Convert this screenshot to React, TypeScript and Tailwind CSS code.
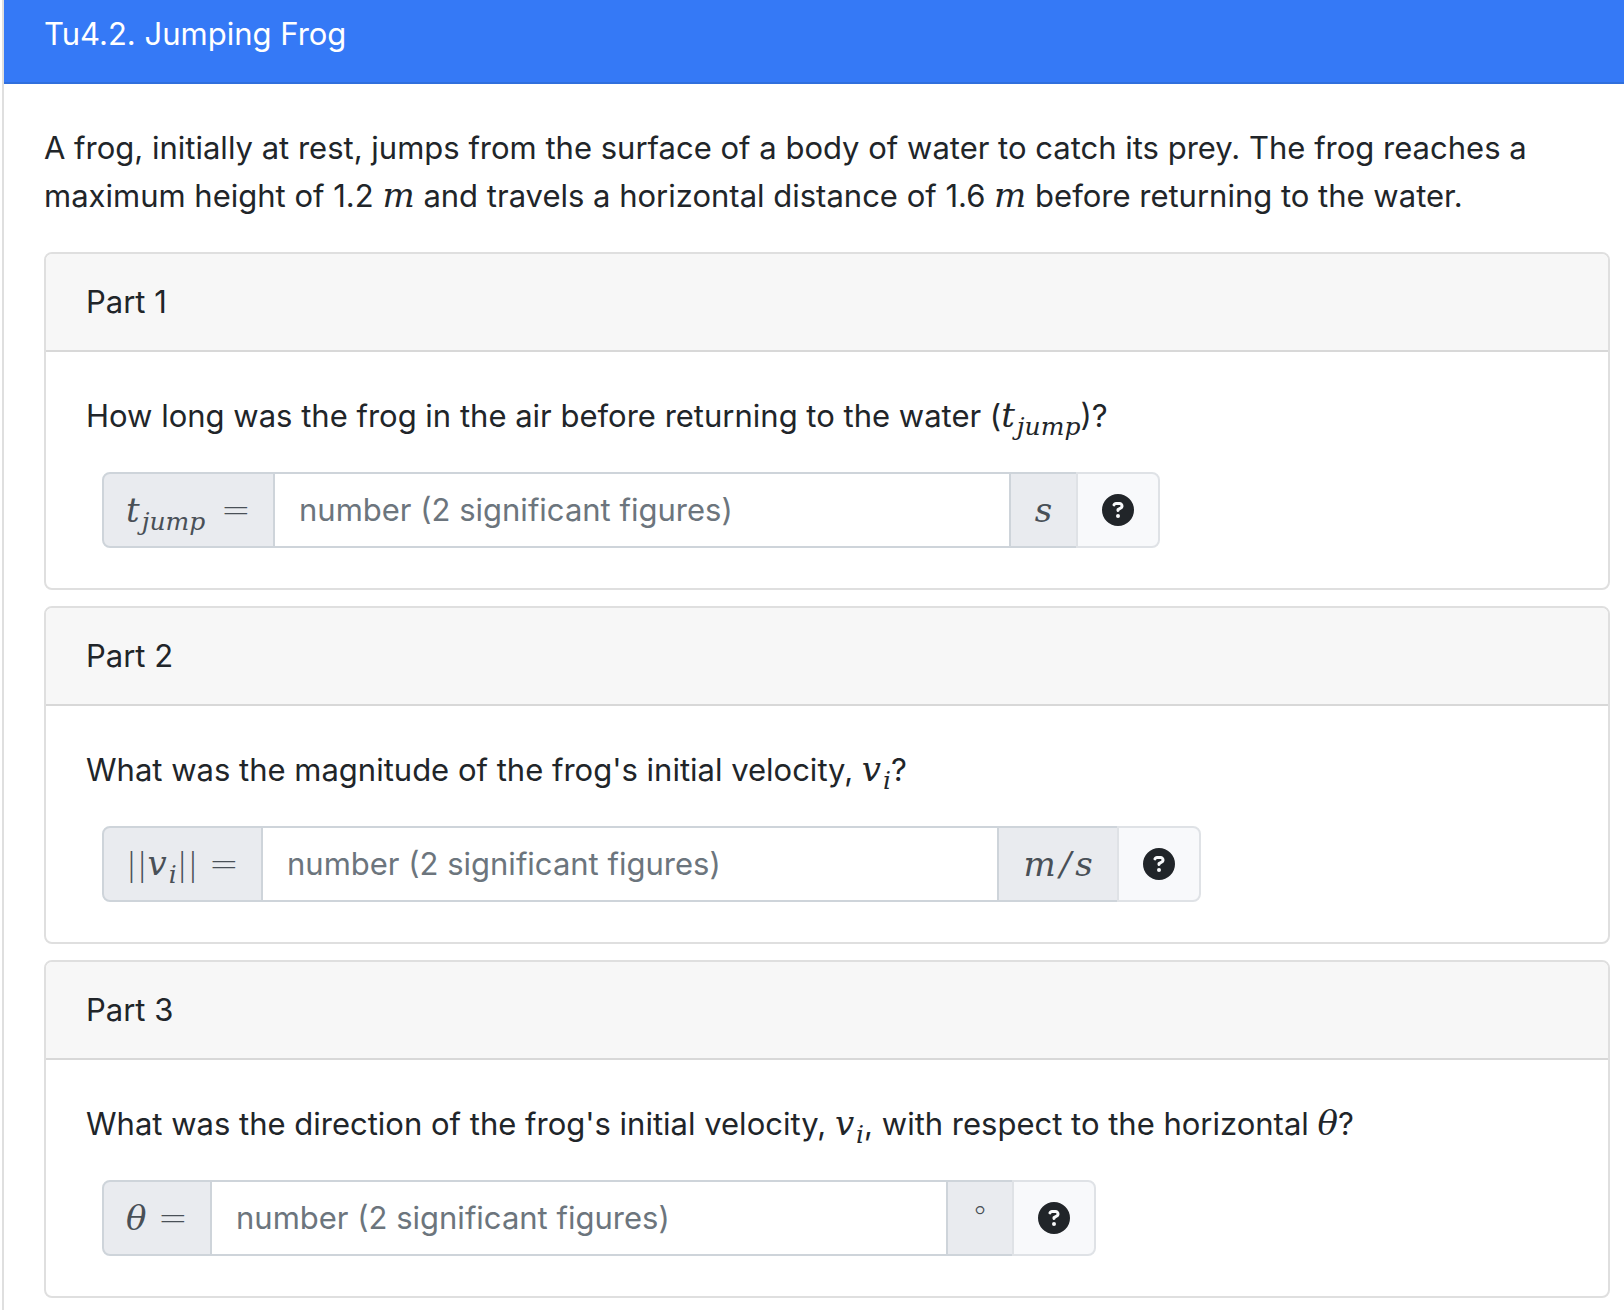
import React from 'react';
import { FaCircleQuestion } from 'react-icons/fa6';

type MathProps = { children: React.ReactNode; className?: string };

// Math variable, set in a serif italic
const Var: React.FC<MathProps> = ({ children }) => (
  <i className="font-['DejaVu_Serif',serif] text-[34px] leading-8 whitespace-nowrap">{children}</i>
);

const Sub: React.FC<MathProps> = ({ children }) => (
  <sub className="top-2 bottom-0 ml-[2px] text-[25px] leading-none">{children}</sub>
);

// Thin operators: equals, norm bars, degree
const Op: React.FC<MathProps> = ({ children, className = 'text-[32px]' }) => (
  <span className={`font-['DejaVu_Sans',sans-serif] leading-8 font-extralight ${className}`}>{children}</span>
);

const TJump: React.FC = () => (
  <Var>
    t<Sub>jump</Sub>
  </Var>
);

const VI: React.FC = () => (
  <Var>
    v<Sub>i</Sub>
  </Var>
);

const PARTS = [
  {
    id: 'tjump',
    title: 'Part 1',
    question: (
      <>
        How long was the frog in the air before returning to the water (<TJump />
        )?
      </>
    ),
    label: <TJump />,
    labelWidth: 'w-[173px]',
    unit: <Var>s</Var>,
    unitWidth: 'w-[69px]',
  },
  {
    id: 'velocity',
    title: 'Part 2',
    question: (
      <>
        What was the magnitude of the frog's initial velocity, <VI />?
      </>
    ),
    label: (
      <span>
        <Op>||</Op>
        <VI />
        <Op>||</Op>
      </span>
    ),
    labelWidth: 'w-[161px]',
    unit: (
      <Var>
        m<span className="mx-1">/</span>s
      </Var>
    ),
    unitWidth: 'w-[122px]',
  },
  {
    id: 'theta',
    title: 'Part 3',
    question: (
      <>
        What was the direction of the frog's initial velocity, <VI />, with respect to the horizontal <Var>θ</Var>?
      </>
    ),
    label: <Var>θ</Var>,
    labelWidth: 'w-[110px]',
    unit: <Op>°</Op>,
    unitWidth: 'w-[68px]',
  },
];

export default function App() {
  return (
    <div className="min-h-screen bg-white pl-[2px] font-['Inter',sans-serif] text-[31px] leading-[48px] text-[#212529]">
      <main className="min-h-screen border-l-2 border-[#dfdfdf]">
        <header className="border-b-2 border-[#306fdd] bg-[#3579f6] px-10 pt-[10px] pb-6 text-white">
          <h1>Tu4.2. Jumping Frog</h1>
        </header>

        <div className="pt-10 pr-[14px] pb-3 pl-10">
          <p className="mb-8">
            A frog, initially at rest, jumps from the surface of a body of water to catch its prey. The frog reaches a
            maximum height of 1.2 <Var>m</Var> and travels a horizontal distance of 1.6 <Var>m</Var> before returning to
            the water.
          </p>

          <div className="flex flex-col gap-4">
            {PARTS.map((part) => (
              <section key={part.id} className="overflow-hidden rounded-lg border-2 border-[#dfdfdf]">
                <h2 className="border-b-2 border-[#d8d8d8] bg-[#f7f7f7] px-10 py-6">{part.title}</h2>
                <div className="p-10">
                  <p className="mb-8">{part.question}</p>

                  {/* Input group */}
                  <div className="ml-4 flex h-[76px]">
                    <label
                      htmlFor={part.id}
                      className={`flex shrink-0 items-center justify-between rounded-l-lg border-2 border-[#ced4da] bg-[#e9ebef] px-[22px] text-[#495057] ${part.labelWidth}`}
                    >
                      {part.label}
                      <Op className="text-[36px]">=</Op>
                    </label>
                    <input
                      id={part.id}
                      type="text"
                      placeholder="number (2 significant figures)"
                      className="-ml-[2px] w-[738px] min-w-0 border-2 border-[#ced4da] bg-white px-6 outline-none placeholder:text-[#6c757d]"
                    />
                    <span
                      className={`-ml-[2px] flex shrink-0 items-center justify-center border-2 border-[#ced4da] bg-[#e9ebef] text-[#495057] ${part.unitWidth}`}
                    >
                      {part.unit}
                    </span>
                    <button
                      type="button"
                      aria-label="Help"
                      className="-ml-[2px] flex w-[84px] shrink-0 items-center justify-center rounded-r-lg border-2 border-[#dfe2e6] bg-[#f8f9fb]"
                    >
                      <FaCircleQuestion className="size-8" />
                    </button>
                  </div>
                </div>
              </section>
            ))}
          </div>
        </div>
      </main>
    </div>
  );
}
